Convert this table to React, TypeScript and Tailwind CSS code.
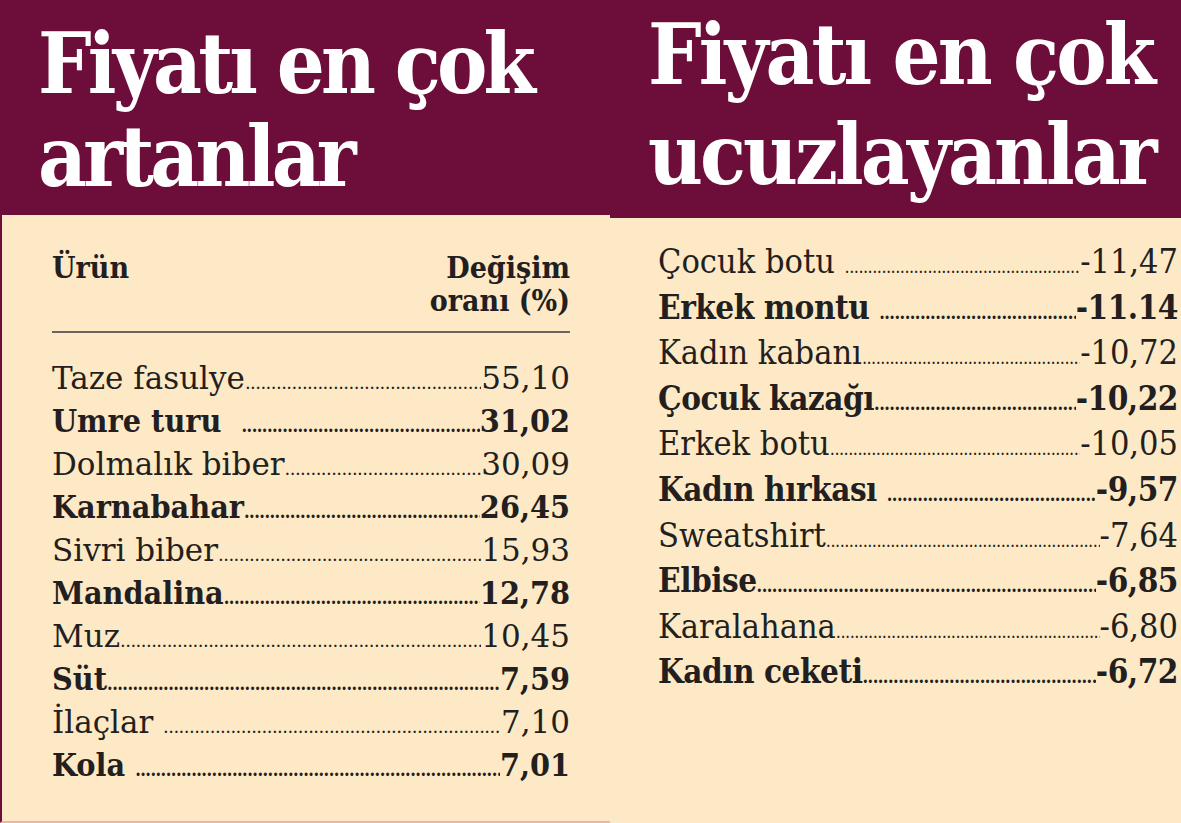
import React from 'react';

type Row = { name: string; value: string; bold?: boolean };

const rising: Row[] = [
  { name: 'Taze fasulye', value: '55,10' },
  { name: 'Umre turu  ', value: '31,02', bold: true },
  { name: 'Dolmalık biber', value: '30,09' },
  { name: 'Karnabahar', value: '26,45', bold: true },
  { name: 'Sivri biber', value: '15,93' },
  { name: 'Mandalina', value: '12,78', bold: true },
  { name: 'Muz', value: '10,45' },
  { name: 'Süt', value: '7,59', bold: true },
  { name: 'İlaçlar ', value: '7,10' },
  { name: 'Kola ', value: '7,01', bold: true },
];

const falling: Row[] = [
  { name: 'Çocuk botu ', value: '-11,47' },
  { name: 'Erkek montu ', value: '-11.14', bold: true },
  { name: 'Kadın kabanı', value: '-10,72' },
  { name: 'Çocuk kazağı', value: '-10,22', bold: true },
  { name: 'Erkek botu', value: '-10,05' },
  { name: 'Kadın hırkası ', value: '-9,57', bold: true },
  { name: 'Sweatshirt', value: '-7,64' },
  { name: 'Elbise', value: '-6,85', bold: true },
  { name: 'Karalahana', value: '-6,80' },
  { name: 'Kadın ceketi', value: '-6,72', bold: true },
];

const DOTS = '.'.repeat(160);

const LeaderRow: React.FC<{ row: Row; regular: string; bold: string }> = ({ row, regular, bold }) => (
  <div className={`flex items-baseline whitespace-pre ${row.bold ? bold : regular}`}>
    <span>{row.name}</span>
    <span className="flex-1 w-0 min-w-0 overflow-hidden text-[18px] leading-none tracking-[-0.03em]">{DOTS}</span>
    <span>{row.value}</span>
  </div>
);

export default function App() {
  return (
    <div className="flex w-[1181px] h-[823px] overflow-hidden bg-[#fde9c6] text-[#231f20] font-['DejaVu_Serif_Condensed','DejaVu_Serif',serif]">
      {/* Left: rising prices */}
      <div className="flex flex-col w-[610px]">
        <div className="h-[215px] bg-[#6d0d3a] pl-[38px] pt-[17px]">
          <h1 className="text-white font-bold text-[84px] leading-[93px] tracking-[-0.045em]">
            Fiyatı en çok<br />artanlar
          </h1>
        </div>
        <div className="flex-1 border-l-2 border-b-2 border-l-[#6d0d3a] border-b-[#e5b9a6] pl-[50px] pr-[40px] pt-[36px]">
          <div className="flex justify-between font-bold text-[30px] leading-[33px]">
            <span>Ürün</span>
            <span className="text-right">Değişim<br />oranı (%)</span>
          </div>
          <div className="h-[2px] bg-[#6b6460] mt-[14px] mb-[24px]" />
          <div className="flex flex-col">
            {rising.map((r) => (
              <LeaderRow
                key={r.name}
                row={r}
                regular="font-['DejaVu_Serif',serif] font-normal text-[31px] leading-[43px]"
                bold="font-bold text-[32px] leading-[43px]"
              />
            ))}
          </div>
        </div>
      </div>

      {/* Right: falling prices */}
      <div className="flex flex-col flex-1">
        <div className="h-[218px] bg-[#6d0d3a] pl-[38px] pt-[5px]">
          <h1 className="text-white font-bold text-[84px] leading-[100px] tracking-[-0.035em]">
            Fiyatı en çok<br />ucuzlayanlar
          </h1>
        </div>
        <div className="flex-1 pl-[48px] pr-[3px] pt-[21px]">
          <div className="flex flex-col">
            {falling.map((r) => (
              <LeaderRow
                key={r.name}
                row={r}
                regular="font-normal text-[34px] leading-[45.6px]"
                bold="font-bold text-[33px] leading-[45.6px] tracking-[-0.015em]"
              />
            ))}
          </div>
        </div>
      </div>
    </div>
  );
}
